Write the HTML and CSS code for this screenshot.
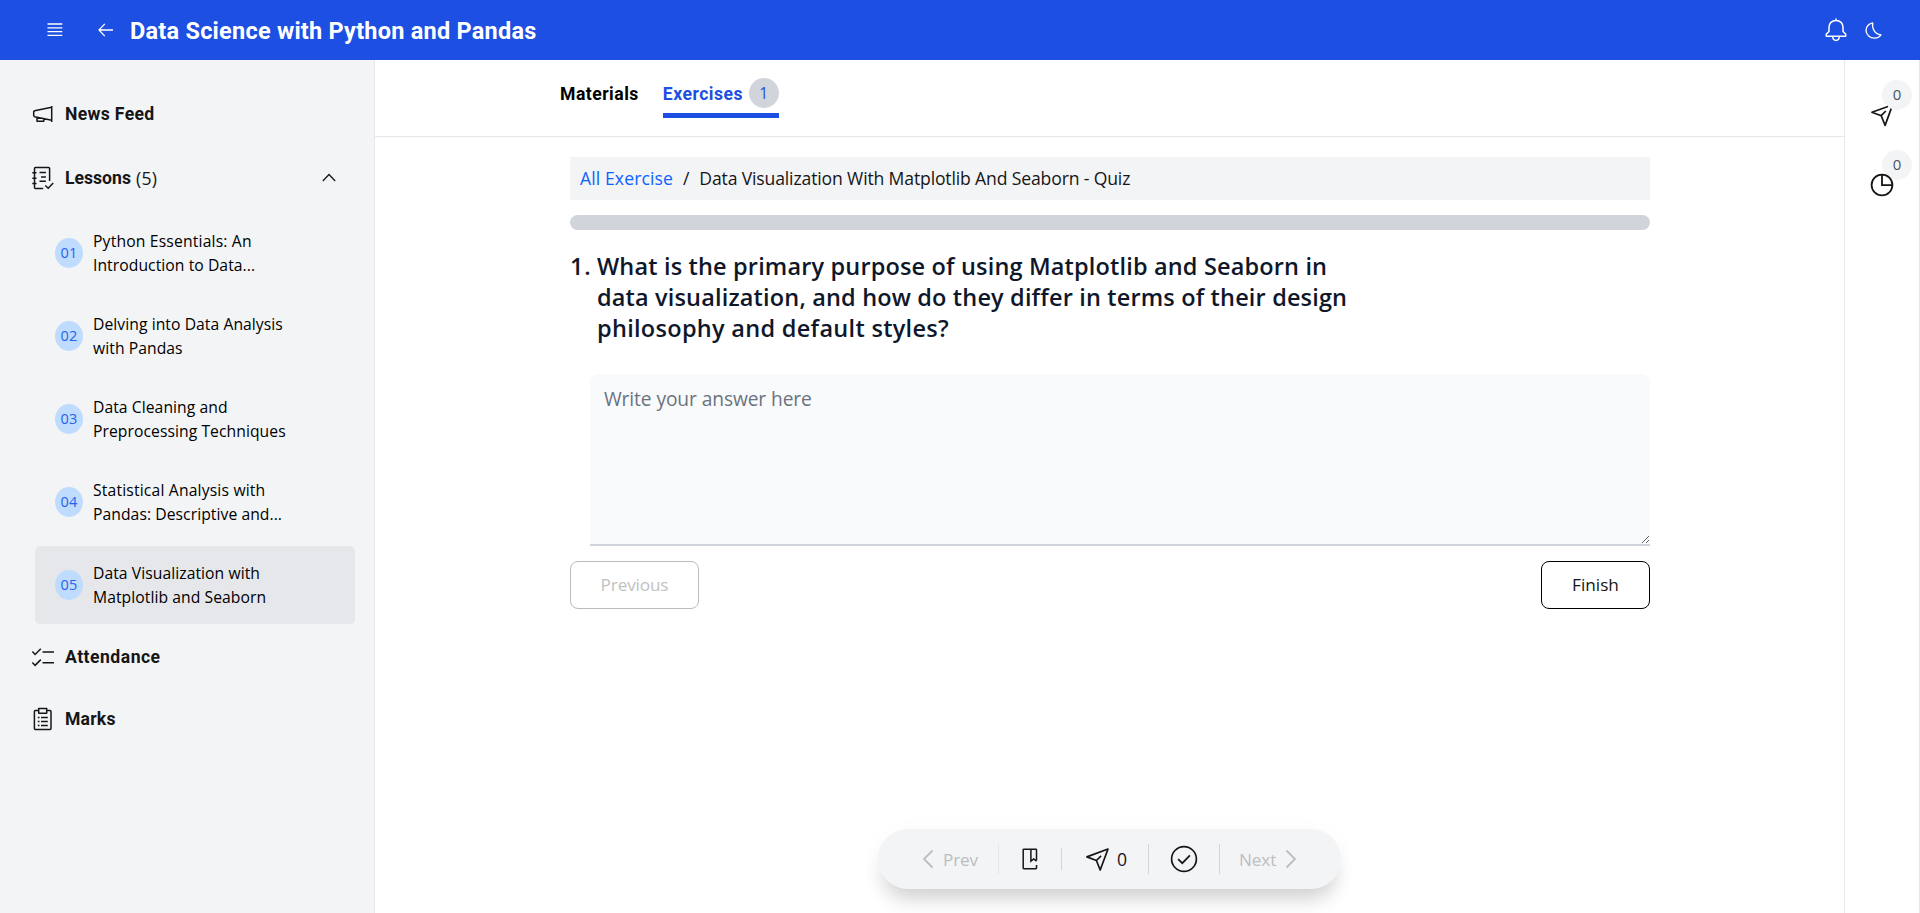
FILE: index.html
```html
<!DOCTYPE html>
<html lang="en">
<head>
<meta charset="utf-8">
<title>Data Science with Python and Pandas</title>
<link rel="stylesheet" href="styles.css">
</head>
<body>
<header class="topbar">
  <svg class="burger" width="16" height="14" viewBox="0 0 16 14" stroke="currentColor" fill="none" stroke-width="1.3"><path d="M.5 1h14.800M.5 4.800h14.800M.5 8.600h14.800M.5 12.400h14.800"/></svg>
  <svg class="back" width="16" height="14" viewBox="0 0 16 14" stroke="currentColor" fill="none" stroke-width="1.3"><path d="M6.800.9L1 7l5.800 6.100M1.200 7H15"/></svg>
  <h1 class="course">Data Science with Python and Pandas</h1>
  <svg class="bell" width="22" height="24" viewBox="0 0 22 24" stroke="currentColor" fill="none" stroke-width="1.5" stroke-linejoin="round"><path d="M11 .5v2M11 2.400C6.800 2.400 4 5.400 4 9.300v4.200L1.300 16v2.300h19.400V16L18 13.500V9.300c0-3.900-2.800-6.900-7-6.900zM7.700 18.500c.2 2.500 1.500 3.900 3.300 3.900s3.100-1.400 3.300-3.900"/></svg>
  <svg class="moon" width="17" height="17" viewBox="0 0 17 17" stroke="currentColor" fill="none" stroke-width="1.300" stroke-linejoin="round"><path d="M7.700.9C6.700 6.800 10 12.300 16 12.900c-1.500 2.200-3.900 3.300-6.600 3.200C4.600 15.900 1 12.400 1 8.300 1 4.800 3.800 1.600 7.700.9z"/></svg>
</header>
<div class="page">
  <aside class="sidebar">
    <a class="row news">
      <svg width="22" height="24" viewBox="0 0 22 24" stroke="currentColor" fill="none" stroke-width="1.500" stroke-linejoin="round"><path d="M19.700 4v16M19.700 5.200L2.600 8.700 1.700 9.600v4.200l.9.900 17.100 3.500M5 15.500v3.700h6.800v-2.300"/></svg>
      <span>News Feed</span>
    </a>
    <a class="row lessons">
      <svg width="22" height="24" viewBox="0 0 22 24" stroke="currentColor" fill="none" stroke-width="1.500"><path d="M17.600 15V2.600q0-1-1-1H3.500q-1 0-1 1v19q0 1 1 1h7.700M.3 6.800h4.200M.3 12.200h4.200M.3 17.600h4.200M7.500 6.500h6.400M9 10.900h4.900M7.500 15.300h6.400M13.300 19.500l2.900 2.800 5-5.200"/></svg>
      <span>Lessons</span><span class="count">(5)</span>
      <svg class="chevron" width="14" height="9" viewBox="0 0 14 9" stroke="currentColor" fill="none" stroke-width="1.300"><path d="M.8 8L7 1.500 13.200 8"/></svg>
    </a>
    <ul class="list">
      <li class="item"><span class="num">01</span><span><span class="loose">Python Essentials: An</span><br>Introduction to Data...</span></li>
      <li class="item"><span class="num">02</span><span>Delving into Data Analysis<br>with Pandas</span></li>
      <li class="item"><span class="num">03</span><span>Data Cleaning and<br>Preprocessing Techniques</span></li>
      <li class="item"><span class="num">04</span><span><span class="loose">Statistical Analysis with</span><br>Pandas: Descriptive and...</span></li>
      <li class="item active"><span class="num">05</span><span>Data Visualization with<br>Matplotlib and Seaborn</span></li>
    </ul>
    <a class="row attendance">
      <svg width="22" height="24" viewBox="0 0 22 24" stroke="currentColor" fill="none" stroke-width="1.500"><path d="M10.500 7H22M10.500 17.800H22M.4 6.600l2.700 2.900 5.700-5.800M.4 17.500l2.700 2.900 5.700-5.800"/></svg>
      <span>Attendance</span>
    </a>
    <a class="row marks">
      <svg width="22" height="24" viewBox="0 0 22 24" stroke="currentColor" fill="none" stroke-width="1.500" stroke-linejoin="round"><path d="M6.500 3.500H3.300q-.9 0-.9.900v17.200q0 .9.900.9h14.800q.9 0 .9-.9V4.400q0-.9-.9-.9h-3.200M6.700 1.500h8v4.700h-8zM5.800 10.400h1.700M5.800 14.400h1.700M5.800 18.400h1.700M9 10.400h6.800M9 14.400h6.800M9 18.400h6.800"/></svg>
      <span>Marks</span>
    </a>
  </aside>
  <main class="main">
    <nav class="tabs">
      <a class="tab">Materials</a>
      <a class="tab selected"><span>Exercises</span><span class="badge">1</span></a>
    </nav>
    <section class="quiz">
      <div class="crumbs"><a class="link">All Exercise</a><span>/</span><span>Data Visualization With Matplotlib And Seaborn - Quiz</span></div>
      <div class="progress"></div>
      <h2 class="question"><span class="index">1.</span><span>What is the primary purpose of using Matplotlib and Seaborn in<br>data visualization, and how do they differ in terms of their design<br><span class="loose">philosophy and default styles?</span></span></h2>
      <textarea class="answer" placeholder="Write your answer here"></textarea>
      <div class="actions"><button class="btn previous" disabled>Previous</button><button class="btn finish">Finish</button></div>
    </section>
    <div class="dock">
      <span class="dim prev"><svg width="12" height="20" viewBox="0 0 12 20" stroke="currentColor" fill="none" stroke-width="1.800"><path d="M10.500 1.500L2 10l8.500 8.500"/></svg>Prev</span>
      <i class="sep faint"></i>
      <svg class="book" width="16" height="22" viewBox="0 0 16 22" stroke="currentColor" fill="none" stroke-width="1.500"><path d="M14.500 12.600V1.900q0-.7-.7-.7H1.900q-.7 0-.7.7v18.200q0 .7.700.7h11.900q.7 0 .7-.7v-3M8.900 1.200v12l2.800-2.200 2.800 2.200"/></svg>
      <i class="sep short"></i>
      <svg class="plane" width="23" height="23" viewBox="0 0 23 23" stroke="currentColor" fill="none" stroke-width="1.700" stroke-linejoin="round"><path d="M22 1L.9 8.900l9.500 3.600L14.200 22zM10.400 12.500l4.700-4.600"/></svg>
      <span class="zero">0</span>
      <i class="sep"></i>
      <svg class="check" width="27" height="27" viewBox="0 0 27 27" stroke="currentColor" fill="none" stroke-width="1.700"><circle cx="13" cy="13" r="12.400"/><path d="M7.100 13.100l4.200 4.100 7.600-7.800"/></svg>
      <i class="sep"></i>
      <span class="dim next">Next<svg width="12" height="20" viewBox="0 0 12 20" stroke="currentColor" fill="none" stroke-width="1.800"><path d="M1.500 1.500L10 10l-8.500 8.500"/></svg></span>
    </div>
  </main>
  <aside class="rail">
    <div class="tool">
      <svg width="22" height="22" viewBox="0 0 22 22" stroke="currentColor" fill="none" stroke-width="1.700" stroke-linejoin="round"><path d="M17 .5L.9 6.200l9.300 3.500 3.900 9.700L20.200 2.600M10.200 9.700l4.600-4.700"/></svg>
      <span class="bubble">0</span>
    </div>
    <div class="tool pie">
      <svg width="23" height="23" viewBox="0 0 23 23" stroke="currentColor" fill="none" stroke-width="1.800"><circle cx="11" cy="11" r="10.400"/><path d="M11 .8v10.300h10.500"/></svg>
      <span class="bubble">0</span>
    </div>
  </aside>
</div>
</body>
</html>
```
FILE: styles.css
```css
* { box-sizing: border-box; }
body {
  margin: 0;
  height: 913px;
  overflow: hidden;
  font-family: "Open Sans", "Noto Sans", sans-serif;
  font-size: 17.6px;
  color: #161616;
  background: #fff;
}
svg { display: block; flex: none; overflow: visible; }

.topbar {
  display: flex;
  align-items: center;
  height: 60px;
  padding: 0 38px 0 47px;
  background: #1d4fe2;
  color: #fff;
}
.back { margin-left: 35px; }
.course {
  margin: 1px auto 0 16px;
  font-family: Roboto, sans-serif;
  font-size: 23.5px;
  line-height: 30px;
  font-weight: 700;
  letter-spacing: .24px;
}
.moon { margin-left: 18px; }

.page { display: flex; height: 853px; }

.sidebar {
  width: 375px;
  flex: none;
  padding: 22px 19px 0 32px;
  background: #f3f4f6;
  border-right: 1px solid #e5e7eb;
}
.row {
  display: flex;
  align-items: center;
  height: 62px;
  gap: 11px;
  font-family: Roboto, sans-serif;
  font-weight: 700;
}
.news { height: 64px; letter-spacing: .32px; }
.lessons { height: 64px; letter-spacing: 0; }
.attendance { letter-spacing: .48px; }
.marks { letter-spacing: .2px; }
.count { margin-left: -6px; font-family: "Open Sans", sans-serif; font-weight: 400; letter-spacing: .3px; }
.chevron { margin: 0 19px 1px auto; }
.list {
  display: flex;
  flex-direction: column;
  gap: 5px;
  margin: 4px 0 2px 3px;
  padding: 0;
  list-style: none;
}
.item {
  display: flex;
  align-items: center;
  gap: 10px;
  height: 78px;
  width: 320px;
  padding: 0 20px;
  border-radius: 5px;
  font-size: 15.7px;
  line-height: 24px;
  letter-spacing: .06px;
  color: #000;
}
.item .loose { letter-spacing: .17px; }
.active { background: #e5e7eb; }
.num {
  width: 28px;
  height: 30px;
  border-radius: 50%;
  background: #bfdbfe;
  color: #2563eb;
  font-size: 14.5px;
  line-height: 30px;
  text-align: center;
  letter-spacing: .3px;
}

.main {
  display: flex;
  flex-direction: column;
  flex: 1;
  min-width: 0;
}
.tabs {
  display: flex;
  gap: 24px;
  height: 77px;
  padding: 18px 0 0 185px;
  border-bottom: 1px solid #e5e7eb;
}
.tab {
  display: flex;
  height: 40px;
  line-height: 32px;
  font-family: Roboto, sans-serif;
  font-weight: 700;
  letter-spacing: .48px;
  color: #000;
}
.selected {
  width: 116px;
  justify-content: space-between;
  border-bottom: 5px solid #1d4fe2;
  color: #1d4fe2;
}
.badge {
  width: 30px;
  height: 30px;
  border-radius: 50%;
  background: #d1d5db;
  font-family: "Open Sans", sans-serif;
  font-size: 15.7px;
  line-height: 30px;
  font-weight: 400;
  letter-spacing: 0;
  text-align: center;
}
.quiz {
  display: flex;
  flex-direction: column;
  width: 1080px;
  margin: 20px 0 0 195px;
}
.crumbs {
  display: flex;
  gap: 10px;
  height: 43px;
  padding: 0 10px;
  line-height: 43px;
  letter-spacing: -.15px;
  background: #f3f4f6;
}
.link { color: #0f62fe; letter-spacing: .1px; }
.progress {
  height: 15px;
  margin-top: 15px;
  border-radius: 8px;
  background: #d1d5db;
}
.question {
  display: flex;
  margin: 21px 0 30px;
  font-size: 23.5px;
  line-height: 31px;
  font-weight: 600;
  letter-spacing: .16px;
  color: #0f172a;
}
.question .loose { letter-spacing: .3px; }
.index { width: 27px; letter-spacing: .8px; }
.answer {
  display: block;
  height: 172px;
  margin-left: 20px;
  padding: 10px 14px;
  border: 0;
  border-bottom: 2px solid #d1d5db;
  border-radius: 8px 8px 0 0;
  outline: 0;
  background: #f9fafb;
  font: 19.2px/29px "Open Sans", "Noto Sans", sans-serif;
  letter-spacing: -.1px;
}
.answer::placeholder { color: #6b7280; }
.actions {
  display: flex;
  justify-content: space-between;
  margin-top: 15px;
}
.btn {
  height: 48px;
  padding: 0;
  border: 1px solid #000;
  border-radius: 8px;
  background: #fff;
  color: #161616;
  font: 17.2px/46px "Open Sans", "Noto Sans", sans-serif;
  letter-spacing: -.15px;
}
.previous { width: 129px; }
.finish { width: 109px; letter-spacing: 0; }
.btn:disabled { border-color: #bbb; color: #c1c1c1; }

.dock {
  display: flex;
  align-items: center;
  width: 463px;
  height: 60px;
  margin: auto 0 24px 503px;
  padding-left: 44px;
  border-radius: 30px;
  background: #f3f4f6;
  box-shadow: 0 16px 20px -6px rgba(0, 0, 0, .17), 0 4px 24px rgba(0, 0, 0, .03);
}
.dim { display: flex; align-items: center; color: #bdbdbd; font-size: 17.2px; letter-spacing: -.15px; }
.prev { width: 76px; gap: 9px; }
.sep { width: 1px; height: 30px; background: #d1d5db; }
.faint { background: #e5e7eb; }
.short { height: 22px; }
.book { margin: 0 23px; }
.plane { margin: 0 8px 0 24px; }
.zero { width: 31px; }
.check { margin: 0 21px 0 22px; }
.next { gap: 9px; margin-left: 19px; }

.rail {
  width: 76px;
  flex: none;
  padding: 46px 0 0 26px;
  border: solid #e5e7eb;
  border-width: 0 1px;
}
.tool { position: relative; width: 23px; height: 23px; }
.pie { margin-top: 45px; }
.bubble {
  position: absolute;
  left: 11px;
  top: -26px;
  z-index: -1;
  width: 30px;
  height: 30px;
  border-radius: 50%;
  background: #f3f4f6;
  color: #4b5563;
  font-size: 15px;
  line-height: 29px;
  text-align: center;
}
.pie .bubble { top: -24px; }
```
